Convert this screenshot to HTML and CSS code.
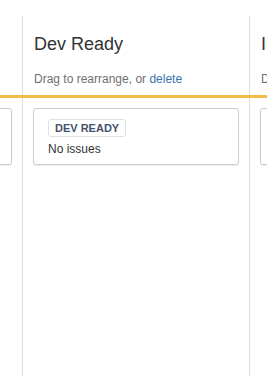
FILE: index.html
```html
<!DOCTYPE html>
<html lang="en">

<head>
    <meta charset="UTF-8">
    <meta name="viewport" content="width=device-width, initial-scale=1.0">
    <title>Board Columns</title>
    <link rel="stylesheet" href="styles.css">
</head>

<body>
    <div class="board">
        <section class="column">
            <header class="column-header"></header>
            <div class="column-body">
                <div class="status-card"></div>
            </div>
        </section>

        <section class="column">
            <header class="column-header">
                <h2 class="column-title">Dev Ready</h2>
                <p class="column-hint">Drag to rearrange, or <a href="#">delete</a></p>
            </header>
            <div class="column-body">
                <div class="status-card">
                    <span class="status-lozenge">Dev Ready</span>
                    <div class="status-count">No issues</div>
                </div>
            </div>
        </section>

        <section class="column">
            <header class="column-header">
                <h2 class="column-title">In Progress</h2>
                <p class="column-hint">Drag to rearrange, or <a href="#">delete</a></p>
            </header>
            <div class="column-body">
                <div class="status-card">
                    <span class="status-lozenge">In Progress</span>
                    <div class="status-count">No issues</div>
                </div>
            </div>
        </section>
    </div>
</body>

</html>
```

FILE: styles.css
```css
/* General Styles */
body {
    font-family: "Liberation Sans", Arial, sans-serif;
    margin: 0;
    padding: 0;
    background-color: #ffffff;
    color: #333333;
    overflow: hidden;
}

/* Board */
.board {
    display: flex;
    margin-left: -204px; /* first column scrolled mostly out of view */
    padding-top: 16px;
    height: 100vh;
    box-sizing: border-box;
}

.column {
    flex: 0 0 226px;
    display: flex;
    flex-direction: column;
    border-left: 1px solid #dddddd;
}

.column:first-child {
    border-left: none;
}

/* Column header */
.column-header {
    padding: 16px 11px 0 12px;
    height: 82px;
    box-sizing: border-box;
    border-bottom: 3px solid #f0be46; /* yellow status bar */
    margin-left: -1px;
}

.column-title {
    margin: 0;
    font-size: 18px;
    font-weight: normal;
    line-height: 24px;
    color: #333333;
    white-space: nowrap;
}

.column-hint {
    margin: 15px 0 0 0;
    font-size: 12px;
    line-height: 16px;
    color: #707070;
    white-space: nowrap;
}

.column-hint a {
    color: #3b73af;
    text-decoration: none;
}

/* Column body */
.column-body {
    flex: 1;
    padding: 10px 10px 0 10px;
}

.status-card {
    border: 1px solid #cccccc;
    border-radius: 3px;
    box-shadow: 0 1px 1px rgba(0, 0, 0, 0.08);
    padding: 9px 14px 10px 14px;
    height: 57px;
    box-sizing: border-box;
}

.status-lozenge {
    display: inline-block;
    border: 1px solid #dfe1e6;
    border-radius: 3px;
    padding: 1px 6px 0 6px;
    font-size: 11px;
    font-weight: bold;
    line-height: 15px;
    text-transform: uppercase;
    color: #42526e;
    white-space: nowrap;
}

.status-count {
    margin-top: 5px;
    font-size: 12px;
    line-height: 14px;
    color: #333333;
}
```
